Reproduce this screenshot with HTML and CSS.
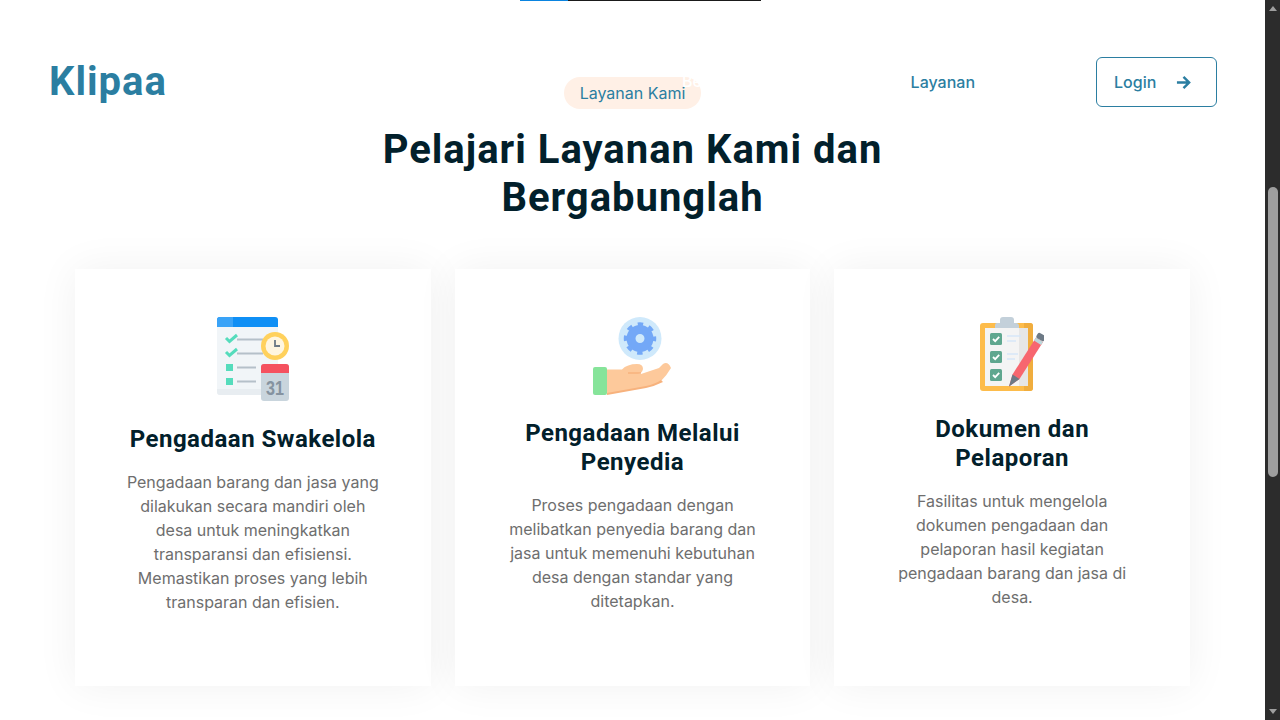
FILE: index.html
```html
<!DOCTYPE html>
<html lang="id">
<head>
<meta charset="utf-8">
<title>Klipaa</title>
<link rel="stylesheet" href="styles.css">
</head>
<body>
<div class="page">
  <div class="progress"><span class="progress-done"></span></div>
  <header class="navbar">
    <a class="brand">Klipaa</a>
    <nav class="nav-right">
      <a class="nav-link nav-home">Beranda</a>
      <a class="nav-link">Layanan</a>
      <a class="login">Login
        <svg class="login-arrow" viewBox="0 0 16 16"><path d="M1 8H14M8 2l6 6-6 6" fill="none" stroke="currentColor" stroke-width="2.600"/></svg>
      </a>
    </nav>
  </header>
  <main class="services">
    <div class="pill">Layanan Kami</div>
    <h1 class="title">Pelajari Layanan Kami dan<br>Bergabunglah</h1>
    <div class="cards">
      <article class="card">
        <svg class="icon icon-a" viewBox="0 0 72 85">
          <path d="M0 3a3 3 0 0 1 3-3h55a3 3 0 0 1 3 3v75H3a3 3 0 0 1-3-3z" fill="#f1f5f8"/>
          <path d="M0 72h61v6H3a3 3 0 0 1-3-3z" fill="#e8edf1"/>
          <path d="M0 10V3a3 3 0 0 1 3-3h55a3 3 0 0 1 3 3v7z" fill="#0f8ff5"/>
          <path d="M0 10V3a3 3 0 0 1 3-3h13v10z" fill="#3aa3f7"/>
          <path d="M9 21l3.500 3.500L20 18M9 35l3.500 3.500L20 32" fill="none" stroke="#55dcbc" stroke-width="3"/>
          <path d="M20 22.500h26M20 36.500h26M20 50.500h19M20 64.500h19" stroke="#b5c0c9" stroke-width="2.200"/>
          <rect x="9" y="47" width="7" height="7" fill="#55dcbc"/>
          <rect x="9" y="61" width="7" height="7" fill="#55dcbc"/>
          <circle cx="58" cy="29" r="14" fill="#ffd15c"/>
          <circle cx="58" cy="29" r="9.500" fill="#fff6e0"/>
          <path d="M58 23v6h5" fill="none" stroke="#6d7a86" stroke-width="1.800"/>
          <rect x="44" y="47" width="28" height="37" rx="3" fill="#c9d5dd"/>
          <path d="M44 56v-6a3 3 0 0 1 3-3h22a3 3 0 0 1 3 3v6z" fill="#f5515f"/>
          <text class="cal-num" x="58" y="78" text-anchor="middle" textLength="18" lengthAdjust="spacingAndGlyphs">31</text>
        </svg>
        <h2 class="card-title">Pengadaan Swakelola</h2>
        <p class="card-text">Pengadaan barang dan jasa yang dilakukan secara mandiri oleh desa untuk meningkatkan transparansi dan efisiensi. Memastikan proses yang lebih transparan dan efisien.</p>
      </article>
      <article class="card">
        <svg class="icon icon-b" viewBox="0 0 78 78">
          <circle cx="47" cy="21.500" r="21.500" fill="#cfe9fb"/>
          <circle cx="47" cy="21.500" r="9" fill="none" stroke="#73a8f7" stroke-width="9"/>
          <circle cx="47" cy="21.500" r="14.500" fill="none" stroke="#73a8f7" stroke-width="3.500" stroke-dasharray="5.500 5.890" stroke-dashoffset="2.750"/>
          <path d="M14 52.500H29Q34 47 44 47Q50 47 50 52Q49 57 44 57H48L66 51L70 47Q75 44 78 51Q74 58 68 64Q62 68 53 70L14 77z" fill="#fdc99b"/>
          <path d="M14 76L53 69Q62 67 68 63L70 65Q62 69 53 71L14 78z" fill="#f7b27d"/>
          <path d="M35 56H48" stroke="#f7b27d" stroke-width="1.500"/>
          <rect x="0" y="50" width="14" height="28" rx="2" fill="#86e49a"/>
        </svg>
        <h2 class="card-title">Pengadaan Melalui Penyedia</h2>
        <p class="card-text">Proses pengadaan dengan melibatkan penyedia barang dan jasa untuk memenuhi kebutuhan desa dengan standar yang ditetapkan.</p>
      </article>
      <article class="card">
        <svg class="icon icon-c" viewBox="0 0 64 74">
          <rect x="0" y="6" width="53" height="68" rx="3" fill="#fdbc4b"/>
          <path d="M44 6h6a3 3 0 0 1 3 3v62a3 3 0 0 1-3 3h-6z" fill="#f0ad3e"/>
          <rect x="5" y="11" width="43" height="58" fill="#f4f4f4"/>
          <rect x="39" y="11" width="9" height="58" fill="#e6e6e6"/>
          <path d="M15 11V8a2 2 0 0 1 2-2h3V3a3 3 0 0 1 3-3h8a3 3 0 0 1 3 3v3h2a3 3 0 0 1 3 3v2z" fill="#c3d0da"/>
          <rect x="10" y="16" width="12" height="12" rx="1.500" fill="#5fa78f"/>
          <rect x="10" y="34" width="12" height="12" rx="1.500" fill="#5fa78f"/>
          <rect x="10" y="52" width="12" height="12" rx="1.500" fill="#5fa78f"/>
          <path d="M13 22l2.200 2.200 4-4.400M13 40l2.200 2.200 4-4.400M13 58l2.200 2.200 4-4.400" fill="none" stroke="#fff" stroke-width="1.800"/>
          <path d="M27 19h14M27 24h9M27 37h11M27 42h8" stroke="#d6e6f7" stroke-width="1.600"/>
          <path d="M29 69.500L32.500 57.500 56 20.500 63 25 39.500 62z" fill="#f7666f"/>
          <path d="M29 69.500L32.500 57.500 39.500 62z" fill="#6d7a86"/>
          <path d="M54 23.500l2-3 7 4.500-2 3z" fill="#bcd8dc"/>
          <rect x="56.500" y="17" width="9" height="6" rx="2" transform="rotate(32 61 20)" fill="#6d7a86"/>
        </svg>
        <h2 class="card-title">Dokumen dan Pelaporan</h2>
        <p class="card-text">Fasilitas untuk mengelola dokumen pengadaan dan pelaporan hasil kegiatan pengadaan barang dan jasa di desa.</p>
      </article>
    </div>
  </main>
</div>
<aside class="scrollbar">
  <span class="sb-up"></span>
  <div class="sb-track"><span class="sb-thumb"></span></div>
  <span class="sb-down"></span>
</aside>
</body>
</html>
```
FILE: styles.css
```css
* { box-sizing: border-box; }
html, body { margin: 0; height: 720px; overflow: hidden; }
body { display: flex; background: #fff; font-family: Inter, "Liberation Sans", sans-serif; }
.page { position: relative; flex: 1; height: 720px; overflow: hidden; background: #fff; }
.progress { position: absolute; top: 0; left: 520px; width: 241px; height: 1px; background: #1a1a1a; }
.progress-done { display: block; width: 48px; height: 1px; background: #0a84e0; }
.navbar { position: absolute; z-index: 2; top: 57px; left: 49px; right: 48px; height: 50px; display: flex; align-items: center; justify-content: space-between; }
.brand { font-family: Roboto, sans-serif; font-weight: 700; font-size: 40px; line-height: 50px; letter-spacing: 1px; color: #2b7ea1; }
.nav-right { display: flex; align-items: center; gap: 121px; }
.nav-link { font-size: 16px; font-weight: 500; color: #2b7ea1; }
.nav-home { color: #fff; margin-right: 44px; margin-bottom: 2px; }
.login { width: 121px; height: 50px; display: flex; align-items: center; padding-left: 17px; gap: 20px; border: 1px solid #2b7ea1; border-radius: 6px; font-size: 16px; font-weight: 500; color: #2b7ea1; }
.login-arrow { width: 15px; height: 15px; }
.services { display: flex; flex-direction: column; align-items: center; padding-top: 77px; }
.pill { height: 32px; line-height: 32px; padding: 0 16px; border-radius: 16px; background: #fff0e6; font-size: 16px; color: #2b7ea1; }
.title { margin: 17px 0 47px; width: 700px; text-align: center; font-family: Roboto, sans-serif; font-size: 40px; line-height: 48px; letter-spacing: 1px; font-weight: 700; color: #02202b; }
.cards { display: grid; grid-template-columns: repeat(3, 1fr); gap: 24px; width: 1115px; }
.card { height: 417px; padding: 48px 48px 0; background: #fff; text-align: center; box-shadow: 0 0 40px rgba(0, 0, 0, .06); }
.icon { display: block; margin: 0 auto; }
.icon-a { width: 72px; height: 85px; margin-bottom: 23px; }
.icon-b { width: 78px; height: 78px; margin-bottom: 24px; }
.icon-c { width: 64px; height: 74px; margin-bottom: 24px; }
.card-title { margin: 0 0 16px; font-family: Roboto, sans-serif; font-size: 24px; line-height: 29px; letter-spacing: .5px; font-weight: 700; color: #02202b; }
.card-text { margin: 0; font-size: 16px; line-height: 24px; color: #6e6e6e; }
.cal-num { font-family: "Liberation Sans", sans-serif; font-size: 21px; font-weight: 700; fill: #8593a0; }
.scrollbar { width: 15px; height: 720px; background: #2c2c2c; display: flex; flex-direction: column; align-items: center; }
.sb-up, .sb-down { width: 0; height: 0; flex: none; border-left: 4.500px solid transparent; border-right: 4.500px solid transparent; }
.sb-up { margin: 6px 0 5px; border-bottom: 5px solid #9e9e9e; }
.sb-down { margin: 5px 0 6px; border-top: 5px solid #9e9e9e; }
.sb-track { flex: 1; width: 100%; padding-top: 171px; display: flex; justify-content: center; }
.sb-thumb { display: block; width: 10px; height: 290px; border-radius: 5px; background: #9e9e9e; }
```
